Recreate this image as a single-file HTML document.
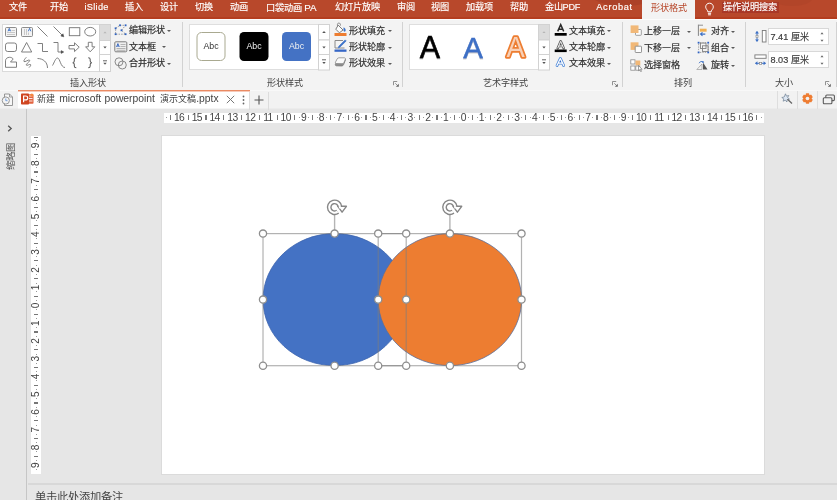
<!DOCTYPE html>
<html lang="zh-CN">
<head>
<meta charset="utf-8">
<title>PowerPoint</title>
<style>
*{box-sizing:border-box;margin:0;padding:0}
html,body{width:837px;height:500px;overflow:hidden;background:#e6e6e6}
body{will-change:transform}
body{font-family:"Liberation Sans",sans-serif;font-size:9.2px;color:#333;position:relative}
.abs{position:absolute}
/* ---------- title / tab strip ---------- */
#titlebar{position:absolute;left:0;top:0;width:837px;height:19px;background:linear-gradient(#b8482b 0,#b8482b 17px,#b43d1f 17.5px,#b43d1f 19px);overflow:hidden}
#titlebar .blob{position:absolute;border-radius:50%;background:#8e2f1f;opacity:.28}
#titlebar span{position:absolute;top:-.6px;height:17px;line-height:17px;color:#fff;font-size:9.2px;white-space:nowrap;-webkit-text-stroke:.15px #fff}
#activetab{position:absolute;left:642px;top:0;width:53px;height:20px;background:#f3f3f3}
#activetab b{position:absolute;left:0;width:53px;text-align:center;top:-.4px;line-height:17px;font-weight:normal;color:#b7472a;font-size:9.2px}
#searchhl{position:absolute;left:722px;top:2px;width:57px;height:10.5px;background:#9e2f25;opacity:.6}
/* ---------- ribbon ---------- */
#ribbon{position:absolute;left:0;top:19px;width:837px;height:71px;background:#f3f3f3;box-shadow:inset 0 1px 0 #fbfbfb}
.gsep{position:absolute;top:3px;width:1px;height:65px;background:#d2d2d2}
.glabel{position:absolute;top:58px;height:12px;line-height:12px;font-size:9.1px;color:#444;white-space:nowrap}
.rtext{position:absolute;height:12px;line-height:12px;font-size:9.1px;color:#2e2e2e;white-space:nowrap;-webkit-text-stroke:.18px #2e2e2e}
.dd{position:absolute;width:0;height:0;margin-left:.4px;border-left:2.1px solid transparent;border-right:2.1px solid transparent;border-top:2.5px solid #5a5a5a}
.gallery{position:absolute;top:5px;height:46px;background:#fff;border:1px solid #dcdcdc}
.gscroll{position:absolute;top:5px;width:11px;height:46px}
.gscroll i{position:absolute;left:0;width:11px;background:#fff;border:1px solid #d0d0d0}
.launcher{position:absolute;top:62px;width:6px;height:6px}
/* ---------- doc tab bar ---------- */
#docbar{position:absolute;left:0;top:89.5px;width:837px;height:18.5px;background:#f2f2f2;border-top:1px solid #f8f8f8;box-shadow:0 1px 0 #ececec}
#doctab{position:absolute;left:17.5px;top:-.5px;width:232px;height:18px;background:#fff;border-top:1px solid #ea8a63;box-shadow:inset 0 1px 0 rgba(234,138,99,.45),0 1px 0 #f5f5f5}
/* ---------- workspace ---------- */
#leftpane{position:absolute;left:0;top:109px;width:27px;height:391px;background:#e6e6e6;border-right:1px solid #c6c6c6}
#hruler{position:absolute;left:164px;top:112.5px;width:600px;height:10.5px;background:#fff;overflow:hidden}
#vruler{position:absolute;left:31px;top:136px;width:10px;height:337.5px;background:#fff;overflow:hidden}
#slide{position:absolute;left:162px;top:136px;width:602px;height:338px;background:#fff;box-shadow:0 0 0 1px #dbdbdb}
#notesline{position:absolute;left:28px;top:483px;width:809px;height:2px;background:#d8d8d8}
#notes{position:absolute;left:35px;top:490px;font-size:11.3px;line-height:14px;color:#444;white-space:nowrap}

#hruler b,#vr b{position:absolute;top:0;width:20px;text-align:center;font-weight:normal;font-size:10.3px;line-height:10px;color:#444;letter-spacing:-.6px;text-indent:-.6px}
#hruler i,#vr i{position:absolute;top:2.9px;width:1.2px;height:4.6px;background:#777}
#hruler u,#vr u{position:absolute;top:4.7px;width:1px;height:1px;background:#999}
#vr b{font-size:10.1px;letter-spacing:-.5px}
#vr{position:absolute;left:0;top:337.5px;width:337.5px;height:10px;transform-origin:0 0;transform:rotate(-90deg)}
.tl{position:absolute;top:.3px;height:15px;line-height:15px;font-size:10.35px;color:#444;white-space:nowrap}
</style>
</head>
<body>
<div id="titlebar">
  <div class="blob" style="left:589px;top:-22px;width:70px;height:27.500px"></div>
  <div class="blob" style="left:772px;top:-8px;width:40px;height:14px;opacity:.12"></div>
  <span style="left:9px">文件</span>
  <span style="left:49.5px">开始</span>
  <span style="left:84.5px;letter-spacing:.3px">iSlide</span>
  <span style="left:125.4px">插入</span>
  <span style="left:160px">设计</span>
  <span style="left:195px">切换</span>
  <span style="left:230px">动画</span>
  <span style="left:265.7px">口袋动画 <span style="position:static;font-size:9.8px">PA</span></span>
  <span style="left:334.5px">幻灯片放映</span>
  <span style="left:397px">审阅</span>
  <span style="left:431px">视图</span>
  <span style="left:465.7px">加载项</span>
  <span style="left:510px">帮助</span>
  <span style="left:545px;letter-spacing:-.25px">金山PDF</span>
  <span style="left:596.3px;letter-spacing:.7px">Acrobat</span>
  <svg class="abs" style="left:704px;top:2px" width="11" height="15" viewBox="0 0 11 15"><path d="M5.500 1.200c-2.300 0-3.800 1.700-3.800 3.700 0 1.400.8 2.300 1.500 3.200.4.500.6 1 .6 1.700h3.400c0-.7.200-1.200.6-1.700.7-.9 1.500-1.800 1.500-3.200 0-2-1.500-3.700-3.800-3.700zM3.900 11.300h3.200M4.100 12.800h2.800" fill="none" stroke="#fff" stroke-width="1"/></svg>
  <div id="searchhl"></div>
  <span style="left:723px">操作说明搜索</span>
</div>
<div id="activetab"><b>形状格式</b></div>

<div id="ribbon">
  <!-- ===== group 1 : insert shapes ===== -->
  <svg class="abs" style="left:2px;top:5px" width="109" height="48" viewBox="0 0 109 48">
    <rect x="0.5" y="0.5" width="97" height="47" fill="#fff" stroke="#dadada"/>
    <g fill="none" stroke="#727272" stroke-width=".9">
      <!-- row 1 -->
      <rect x="3.5" y="3.5" width="11" height="9" rx="1" fill="#f4f4f4" stroke="#808080"/>
      <path d="M9.500 6.500h3.500M5 8.500h8M5 10.500h8" stroke="#bdbdbd" stroke-width=".8"/>
      <path d="M6 7.3l1.3-3 1.3 3M6.4 6.3h1.8" stroke="#3b6fc4" stroke-width=".9"/>
      <rect x="19.500" y="3.5" width="11" height="9" rx="1" fill="#f4f4f4" stroke="#808080"/>
      <path d="M22.500 5v6M24.500 5v6M26.500 8.500v2.500" stroke="#b4b4b4" stroke-width=".7"/>
      <path d="M26.300 7.300l1.300-3 1.300 3" stroke="#3b6fc4" stroke-width=".9"/>
      <path d="M35.500 2.500l10 10"/>
      <path d="M51.500 2.500l9.500 9.500"/><path d="M61.800 12.800l-3-.8 2.200-2.200z" fill="#444" stroke="#444" stroke-width=".5"/>
      <rect x="67.300" y="3.700" width="10.500" height="8"/>
      <ellipse cx="88.200" cy="7.700" rx="5.500" ry="4.300"/>
      <!-- row 2 -->
      <rect x="3.500" y="19" width="11" height="8.500" rx="2.200"/>
      <path d="M19.500 28l5.100-9.500 5.100 9.500z"/>
      <path d="M35.500 19.500h5v8h5.500"/>
      <path d="M51.500 18.500h4.500v9.500h4"/><path d="M61.800 28l-2.600-1.500v3z" fill="#444" stroke="#444" stroke-width=".4"/>
      <path d="M67 21.500h5.500v-2.700l4.700 4.400-4.700 4.400v-2.700h-5.500z"/>
      <path d="M86.300 18.300h3.800v4.500h2.700l-4.600 5-4.600-5h2.700z"/>
      <!-- row 3 -->
      <path d="M3.500 43.300v-6.500c0-2 1.700-3.500 4-3.500 1.800 0 3 .7 3.700 1.700l-2.700 3h6v5.300z"/>
      <path d="M24.300 33.300c-1.400 1.600-2.800 3.200-2.300 4.200.6 1.100 4.800-2.300 5.600-1.300.9 1.100-3.800 3.600-3.300 4.900.4 1 3.600-1.300 4.300-.5.600.7-.8 2.200-1.600 3" stroke-width=".9"/>
      <path d="M35.500 34.500c5.500 0 10 3.500 10 9.500"/>
      <path d="M50.500 41.500c1.800-3 3-7.500 5-7.500 2.500 0 3 9.500 7.500 9.500"/>
      <path d="M74.300 33.800c-1.800 0-2 .6-2 1.800v1.500c0 1-.5 1.500-1.600 1.700 1.100.2 1.600.7 1.600 1.700v1.500c0 1.200.2 1.800 2 1.800" stroke="#5a5a5a" stroke-width="1.050"/>
      <path d="M86.200 33.800c1.800 0 2 .6 2 1.800v1.500c0 1 .5 1.500 1.600 1.700-1.100.2-1.600.7-1.600 1.700v1.500c0 1.200-.2 1.800-2 1.800" stroke="#5a5a5a" stroke-width="1.050"/>
    </g>
    <!-- scroll buttons -->
    <rect x="97.500" y="0.500" width="11" height="16" fill="#dcdcdc" stroke="#d2d2d2"/>
    <rect x="97.500" y="16.500" width="11" height="14" fill="#fff" stroke="#d2d2d2"/>
    <rect x="97.500" y="30.500" width="11" height="17" fill="#fff" stroke="#d2d2d2"/>
    <path d="M101.400 9.200l1.600-1.800 1.600 1.800z" fill="#b5b5b5"/>
    <path d="M101.300 22.500h3.400l-1.700 2z" fill="#555"/>
    <path d="M101 36.800h4" stroke="#555" stroke-width=".9"/>
    <path d="M101.300 38.800h3.400l-1.700 2z" fill="#555"/>
  </svg>
  <!-- edit shape -->
  <svg class="abs" style="left:114px;top:5px" width="14" height="12" viewBox="0 0 14 12">
    <path d="M1.6 4.3 L6 1.3 L11.6 1.3 L7.5 6.3 L11.6 10.2 L1.6 10.2z" fill="none" stroke="#8a8a8a" stroke-width=".8" stroke-dasharray="1.500 1.100"/>
    <g fill="#2f62c0"><rect x="0.7" y="3.4" width="1.800" height="1.800"/><rect x="5.1" y="0.4" width="1.800" height="1.800"/><rect x="10.7" y="0.4" width="1.800" height="1.800"/><rect x="6.6" y="5.4" width="1.800" height="1.800"/><rect x="10.7" y="9.3" width="1.800" height="1.800"/><rect x="0.7" y="9.3" width="1.800" height="1.800"/></g>
  </svg>
  <div class="rtext" style="left:129px;top:5px">编辑形状</div><div class="dd" style="left:167px;top:10.500px"></div>
  <!-- text box -->
  <svg class="abs" style="left:114px;top:21.500px" width="14" height="12" viewBox="0 0 14 12">
    <rect x=".8" y=".8" width="12" height="10" rx="1" fill="#efefef" stroke="#7d7d7d"/>
    <path d="M6.500 3.500h5M6.500 5.500h5M2.500 7.500h9M2.500 9.300h9" stroke="#a5a5a5" stroke-width=".8" fill="none"/>
    <path d="M2.500 6l1.400-3.400 1.400 3.400M3 5h1.800" stroke="#2f62c0" stroke-width=".9" fill="none"/>
  </svg>
  <div class="rtext" style="left:129px;top:21.500px">文本框</div><div class="dd" style="left:162px;top:27px"></div>
  <!-- merge shapes -->
  <svg class="abs" style="left:114px;top:38px" width="14" height="13" viewBox="0 0 14 13">
    <circle cx="5" cy="4.800" r="4" fill="#f3f3f3" stroke="#7d7d7d" stroke-width=".9"/>
    <circle cx="8.300" cy="8" r="4" fill="none" stroke="#7d7d7d" stroke-width=".9"/>
  </svg>
  <div class="rtext" style="left:129px;top:38px">合并形状</div><div class="dd" style="left:167px;top:44px"></div>
  <div class="glabel" style="left:70px">插入形状</div>
  <div class="gsep" style="left:182px"></div>
  <!-- ===== group 2 : shape styles ===== -->
  <svg class="abs" style="left:189px;top:5px" width="141" height="47" viewBox="0 0 141 47">
    <rect x="0.5" y="0.5" width="129" height="45" fill="#fff" stroke="#dedede"/>
    <rect x="8" y="8.500" width="28" height="28" rx="4.500" fill="#fff" stroke="#a9a990" stroke-width="1"/>
    <rect x="50.500" y="8" width="29" height="29" rx="4.500" fill="#000"/>
    <rect x="93" y="8" width="29" height="29" rx="4.500" fill="#4472c4"/>
    <g font-family="Liberation Sans, sans-serif" font-size="8.800" text-anchor="middle">
      <text x="22" y="24.800" fill="#333">Abc</text>
      <text x="65" y="24.800" fill="#f2f2f2">Abc</text>
      <text x="107.500" y="24.800" fill="#f2f2f2">Abc</text>
    </g>
    <rect x="129.500" y="0.500" width="11" height="15.500" fill="#fff" stroke="#d2d2d2"/>
    <rect x="129.500" y="16" width="11" height="14.500" fill="#fff" stroke="#d2d2d2"/>
    <rect x="129.500" y="30.500" width="11" height="15.500" fill="#fff" stroke="#d2d2d2"/>
    <path d="M133.200 9.100l1.800-2 1.800 2z" fill="#555"/>
    <path d="M133.300 22.400h3.400l-1.700 2z" fill="#555"/>
    <path d="M133 35.800h4" stroke="#555" stroke-width=".9"/>
    <path d="M133.300 38h3.400l-1.700 2z" fill="#555"/>
  </svg>
  <!-- shape fill -->
  <svg class="abs" style="left:334px;top:3px" width="14" height="15" viewBox="0 0 14 15">
    <path d="M4.200 3.200l4.800 4.800-3.600 2.800-3.600-3.600z" fill="#fdfdfd" stroke="#6d6d6d" stroke-width=".9" stroke-linejoin="round"/>
    <path d="M3.500 3.800c-.4-1.800.4-2.800 1.400-2.800s1.700 1 1.500 2.600" fill="none" stroke="#6d6d6d" stroke-width=".8"/>
    <path d="M9.500 5.500c1.200.3 2.200 1.300 2.200 2.800 0 .8-.5 1.400-1.100 1.400s-1.100-.6-1.100-1.400z" fill="#3d73c9"/>
    <rect x=".5" y="11" width="12" height="3" fill="#ed7d31"/>
  </svg>
  <div class="rtext" style="left:349px;top:5.500px">形状填充</div><div class="dd" style="left:387.500px;top:11px"></div>
  <!-- shape outline -->
  <svg class="abs" style="left:334px;top:19px" width="14" height="15" viewBox="0 0 14 15">
    <path d="M9 2.500H1v7.500h9.500" fill="none" stroke="#8a8a8a" stroke-width="1"/>
    <path d="M4.800 8.300l6.400-6.400 1 1-6.400 6.400-1.500.5z" fill="#3d73c9" stroke="#3d73c9" stroke-width=".7" stroke-linejoin="round"/>
    <rect x=".5" y="11.500" width="12" height="2.300" fill="#3667c6"/>
  </svg>
  <div class="rtext" style="left:349px;top:22px">形状轮廓</div><div class="dd" style="left:387.500px;top:27.500px"></div>
  <!-- shape effects -->
  <svg class="abs" style="left:334px;top:37.400px" width="14" height="13" viewBox="0 0 14 13">
    <path d="M2.200 9.800c-.9-.3-1.200-1-.7-2l2-4c.4-.8 1-1.200 1.900-1.200h4.800c1.100 0 1.500.8 1.100 1.800l-1.700 4.200c-.4.900-.9 1.400-1.900 1.400z" fill="#8f8f8f" stroke="#707070" stroke-width=".7"/>
    <path d="M2.300 7.600c-.9-.2-1.100-.9-.7-1.700l1.500-2.900c.4-.8 1-1.200 1.900-1.200h5.200c1.100 0 1.500.7 1.100 1.600l-1.300 3c-.4.900-.9 1.300-1.900 1.300z" fill="#fafafa" stroke="#7b7b7b" stroke-width=".7"/>
  </svg>
  <div class="rtext" style="left:349px;top:38px">形状效果</div><div class="dd" style="left:387.500px;top:43.500px"></div>
  <div class="glabel" style="left:267.300px">形状样式</div>
  <svg class="launcher" style="left:392.500px" viewBox="0 0 6 6"><path d="M.5 4.200V.5H4.200M2.300 2.300l2.500 2.500" fill="none" stroke="#777" stroke-width=".8"/><path d="M5.800 2.800v3h-3z" fill="#666"/></svg>
  <div class="gsep" style="left:401.500px"></div>
  <!-- ===== group 3 : wordart styles ===== -->
  <svg class="abs" style="left:409px;top:5px" width="141" height="47" viewBox="0 0 141 47">
    <defs><filter id="sh" x="-20%" y="-20%" width="140%" height="150%"><feDropShadow dx="0" dy="1" stdDeviation=".7" flood-color="#000" flood-opacity=".35"/></filter></defs>
    <rect x="0.5" y="0.5" width="129" height="45" fill="#fff" stroke="#dedede"/>
    <g font-family="Liberation Sans, sans-serif" font-size="30.500" text-anchor="middle">
      <text x="20.800" y="34" fill="#000" stroke="#000" stroke-width=".5" filter="url(#sh)">A</text>
      <text x="64" y="34" fill="#3e6fc6" stroke="#3e6fc6" stroke-width=".4" font-size="29.500" filter="url(#sh)">A</text>
      <g transform="translate(106.700 33.400) scale(.936 1)"><text x="0" y="0" fill="#ed7d31" stroke="#ed7d31" stroke-width="3.600" stroke-linejoin="round" font-size="29.300">A</text><text x="0" y="0" fill="#f8d0b6" font-size="29.300">A</text></g>
    </g>
    <rect x="129.500" y="0.500" width="11" height="15.500" fill="#dcdcdc" stroke="#d2d2d2"/>
    <rect x="129.500" y="16" width="11" height="14.500" fill="#fff" stroke="#d2d2d2"/>
    <rect x="129.500" y="30.500" width="11" height="15.500" fill="#fff" stroke="#d2d2d2"/>
    <path d="M133.400 9l1.600-1.800 1.600 1.800z" fill="#b5b5b5"/>
    <path d="M133.300 22.400h3.400l-1.700 2z" fill="#555"/>
    <path d="M133 35.800h4" stroke="#555" stroke-width=".9"/>
    <path d="M133.300 38h3.400l-1.700 2z" fill="#555"/>
  </svg>
  <!-- text fill -->
  <svg class="abs" style="left:553.500px;top:3px" width="14" height="15" viewBox="0 0 14 15">
    <path d="M3.700 9.400l3-6.800 3 6.800M4.700 7.200h4" fill="none" stroke="#2b2b2b" stroke-width="1.500" stroke-linejoin="miter"/>
    <rect x=".7" y="11" width="12" height="2.700" fill="#000"/>
  </svg>
  <div class="rtext" style="left:568.500px;top:5.500px">文本填充</div><div class="dd" style="left:607px;top:11px"></div>
  <!-- text outline -->
  <svg class="abs" style="left:553.500px;top:19px" width="14" height="15" viewBox="0 0 14 15">
    <path d="M3.700 10.300l3-7 3 7M4.800 8h3.800" fill="none" stroke="#5a5a5a" stroke-width="2.500" stroke-linejoin="round" stroke-linecap="round"/>
    <path d="M3.700 10.300l3-7 3 7M4.800 8h3.800" fill="none" stroke="#fff" stroke-width=".9"/>
    <rect x=".7" y="11.500" width="12" height="2.600" fill="#000"/>
  </svg>
  <div class="rtext" style="left:568.500px;top:22px">文本轮廓</div><div class="dd" style="left:607px;top:27.500px"></div>
  <!-- text effects -->
  <svg class="abs" style="left:553.500px;top:36px" width="14" height="15" viewBox="0 0 14 15">
    <path d="M3 10.600l3.350-7.200 3.350 7.200M4.200 8.200h4.300" fill="none" stroke="#4a86d8" stroke-width="2.700" stroke-linejoin="round" stroke-linecap="round"/>
    <path d="M3 10.600l3.350-7.200 3.350 7.200M4.200 8.200h4.300" fill="none" stroke="#fff" stroke-width="1.200" stroke-linejoin="round" stroke-linecap="round"/>
    <circle cx="6.350" cy="6.600" r=".6" fill="#2f62c0"/>
  </svg>
  <div class="rtext" style="left:568.500px;top:38px">文本效果</div><div class="dd" style="left:607px;top:43.500px"></div>
  <div class="glabel" style="left:482.800px">艺术字样式</div>
  <svg class="launcher" style="left:612px" viewBox="0 0 6 6"><path d="M.5 4.200V.5H4.200M2.300 2.300l2.500 2.500" fill="none" stroke="#777" stroke-width=".8"/><path d="M5.800 2.800v3h-3z" fill="#666"/></svg>
  <div class="gsep" style="left:621.500px"></div>
  <!-- ===== group 4 : arrange ===== -->
  <!-- bring forward -->
  <svg class="abs" style="left:630px;top:6px" width="13" height="12" viewBox="0 0 13 12">
    <rect x="5.500" y="4.500" width="5.800" height="5.800" rx=".6" fill="#fdfdfd" stroke="#909090" stroke-width=".85"/>
    <rect x=".6" y=".4" width="7.900" height="7.600" fill="#f1b878"/>
  </svg>
  <div class="rtext" style="left:644.300px;top:6px">上移一层</div><div class="dd" style="left:687px;top:11.500px"></div>
  <!-- send backward -->
  <svg class="abs" style="left:630px;top:23px" width="13" height="12" viewBox="0 0 13 12">
    <rect x=".6" y=".3" width="7.900" height="7.600" fill="#f1b878"/>
    <rect x="5.200" y="4.200" width="6.300" height="6.300" rx=".6" fill="#fdfdfd" stroke="#8a8a8a" stroke-width=".9"/>
  </svg>
  <div class="rtext" style="left:644.300px;top:22.500px">下移一层</div><div class="dd" style="left:687px;top:28px"></div>
  <!-- selection pane -->
  <svg class="abs" style="left:630px;top:40px" width="13" height="13" viewBox="0 0 13 13">
    <rect x=".8" y=".8" width="4.200" height="4.200" fill="#fff" stroke="#8a8a8a" stroke-width=".8"/>
    <rect x="5.500" y="1.500" width="4.800" height="4.800" fill="#f1b878"/>
    <rect x=".8" y="7" width="4.200" height="4.200" fill="#fff" stroke="#8a8a8a" stroke-width=".8"/>
    <rect x="5.800" y="7" width="4" height="4.200" fill="#fff" stroke="#8a8a8a" stroke-width=".8"/>
    <path d="M8.500 6.500v5.200l1.200-1 1 2 .8-.4-1-2h1.600z" fill="#fff" stroke="#666" stroke-width=".6"/>
  </svg>
  <div class="rtext" style="left:644.300px;top:40px">选择窗格</div>
  <!-- align -->
  <svg class="abs" style="left:697px;top:5px" width="12" height="14" viewBox="0 0 12 14">
    <path d="M1.400 .7v11.200" stroke="#858585" stroke-width="1" fill="none"/>
    <path d="M1.400 1.200h4.600" stroke="#858585" stroke-width=".9" fill="none"/>
    <rect x="2.800" y="4.700" width="6.800" height="3" fill="#f1b050"/>
    <path d="M8.300 10.100h-4.600M5.500 8.300l-2 1.800 2 1.800" fill="none" stroke="#3b6fc4" stroke-width="1.100"/>
  </svg>
  <div class="rtext" style="left:710.600px;top:6px">对齐</div><div class="dd" style="left:730.500px;top:11.500px"></div>
  <!-- group -->
  <svg class="abs" style="left:696.500px;top:22px" width="13" height="13" viewBox="0 0 13 13">
    <path d="M3 1.700h7M3 11.400h7M1.600 3v7M11.200 3v7" fill="none" stroke="#8f8f8f" stroke-width=".8" stroke-dasharray="1.300 1.100"/>
    <rect x="3.400" y="2.100" width="5.600" height="5.400" fill="#f6f6f6" stroke="#7a7a7a" stroke-width=".85"/>
    <rect x="5.500" y="4.800" width="5.600" height="5.600" fill="none" stroke="#7a7a7a" stroke-width=".85"/>
    <g fill="#2f62c0"><rect x=".7" y=".8" width="1.800" height="1.800"/><rect x="10.300" y=".8" width="1.800" height="1.800"/><rect x=".7" y="10.500" width="1.800" height="1.800"/><rect x="10.300" y="10.500" width="1.800" height="1.800"/></g>
  </svg>
  <div class="rtext" style="left:710.600px;top:22.500px">组合</div><div class="dd" style="left:730.500px;top:28px"></div>
  <!-- rotate -->
  <svg class="abs" style="left:696px;top:41px" width="13" height="11" viewBox="0 0 13 11">
    <path d="M.8 9.500l5.200-5.500v5.500z" fill="#f2f2f2" stroke="#9a9a9a" stroke-width=".7"/>
    <path d="M7 9.500v-7l4.500 7z" fill="#555"/>
    <path d="M3 3.200c.8-1.600 2.600-2.200 4.200-1.400" fill="none" stroke="#3b6fc4" stroke-width=".9"/><path d="M8.200 2.600l-2.300.4 1.300-1.900z" fill="#3b6fc4"/>
  </svg>
  <div class="rtext" style="left:710.600px;top:40px">旋转</div><div class="dd" style="left:730.500px;top:45.500px"></div>
  <div class="glabel" style="left:674.300px">排列</div>
  <div class="gsep" style="left:745px"></div>
  <!-- ===== group 5 : size ===== -->
  <svg class="abs" style="left:753.500px;top:10.500px" width="13" height="13" viewBox="0 0 13 13">
    <rect x="8.300" y=".5" width="3.700" height="11.500" fill="#fff" stroke="#7a7a7a" stroke-width=".9"/>
    <path d="M3 1.500v10" stroke="#3b6fc4" stroke-width="1" fill="none"/>
    <path d="M1 3.400l2-2.400 2 2.400zM1 9.400l2 2.400 2-2.400z" fill="#3b6fc4"/>
    <rect x="2" y="5.200" width="2" height="2.400" fill="#fff" stroke="#7a7a7a" stroke-width=".6"/>
  </svg>
  <div class="abs" style="left:768px;top:9px;width:60.500px;height:17px;background:#fff;border:1px solid #d8d8d8"></div>
  <div class="rtext" style="left:770.500px;top:12px;color:#444">7.41 厘米</div>
  <svg class="abs" style="left:819px;top:12px" width="6" height="12" viewBox="0 0 6 12"><path d="M1.500 3.200l1.500-1.900 1.500 1.900zM1.500 8.800l1.500 1.900 1.500-1.900z" fill="#666"/></svg>
  <svg class="abs" style="left:753.500px;top:34.500px" width="13" height="13" viewBox="0 0 13 13">
    <rect x=".9" y=".9" width="11.200" height="3.400" fill="#fff" stroke="#7a7a7a" stroke-width=".9"/>
    <path d="M1.500 9.300h10" stroke="#3b6fc4" stroke-width="1" fill="none"/>
    <path d="M3.400 7.300l-2.400 2 2.400 2zM9.600 7.300l2.400 2-2.400 2z" fill="#3b6fc4"/>
    <rect x="5.300" y="8.300" width="2.400" height="2" fill="#fff" stroke="#7a7a7a" stroke-width=".6"/>
  </svg>
  <div class="abs" style="left:768px;top:32px;width:60.500px;height:17.300px;background:#fff;border:1px solid #d8d8d8"></div>
  <div class="rtext" style="left:770.500px;top:35px;color:#444">8.03 厘米</div>
  <svg class="abs" style="left:819px;top:35px" width="6" height="12" viewBox="0 0 6 12"><path d="M1.500 3.200l1.500-1.900 1.500 1.900zM1.500 8.800l1.500 1.900 1.500-1.900z" fill="#666"/></svg>
  <div class="glabel" style="left:774.700px">大小</div>
  <div class="gsep" style="left:835.500px"></div>
  <svg class="launcher" style="left:825px" viewBox="0 0 6 6"><path d="M.5 4.200V.5H4.200M2.300 2.300l2.500 2.500" fill="none" stroke="#777" stroke-width=".8"/><path d="M5.800 2.800v3h-3z" fill="#666"/></svg>
</div>
<div id="docbar">
  <svg class="abs" style="left:1px;top:2.500px" width="13" height="14" viewBox="0 0 13 14">
    <path d="M3.500 1h5l3 3v8.500h-8z" fill="#f7f7f7" stroke="#8c8c8c" stroke-width=".9"/><path d="M8.500 1v3h3" fill="none" stroke="#8c8c8c" stroke-width=".8"/>
    <circle cx="4.800" cy="7.500" r="3.600" fill="#f4f4f4" stroke="#8c8c8c" stroke-width=".9"/><path d="M4.800 5.500v2.200h1.700" fill="none" stroke="#5b8dd6" stroke-width=".8"/>
  </svg>
  <div id="doctab">
    <svg class="abs" style="left:3.500px;top:2px" width="13" height="12" viewBox="0 0 13 12">
      <rect x="5" y="1.200" width="7.500" height="9.600" rx=".8" fill="#e2633f"/>
      <rect x="6" y="2.500" width="5.500" height="1" fill="#fff" opacity=".85"/><rect x="6" y="5" width="5.500" height="1" fill="#fff" opacity=".85"/><rect x="6" y="7.500" width="5.500" height="1" fill="#fff" opacity=".85"/>
      <circle cx="10.900" cy="1.900" r="1.500" fill="#f5873f"/>
      <rect x="0" y="0.500" width="8" height="11" rx=".8" fill="#cf4520"/>
      <path d="M2.600 9.300v-6.300h2c1.400 0 2.100.8 2.100 1.900s-.8 2-2.100 2h-1.900" fill="none" stroke="#fff" stroke-width="1.200"/>
    </svg>
    <span class="tl" style="left:19.600px;font-size:9px;top:1.100px">新建</span><span class="tl" style="left:41.700px">microsoft</span><span class="tl" style="left:86.900px">powerpoint</span><span class="tl" style="left:142.700px;font-size:9px;top:1.100px">演示文稿</span><span class="tl" style="left:178.700px">.pptx</span>
    <svg class="abs" style="left:208px;top:4px" width="9" height="9" viewBox="0 0 9 9"><path d="M.8 .8l7.400 7.400M8.200 .8l-7.400 7.400" stroke="#777" stroke-width="1" fill="none"/></svg>
    <svg class="abs" style="left:224px;top:3.500px" width="3" height="10" viewBox="0 0 3 10"><circle cx="1.500" cy="1.500" r=".9" fill="#666"/><circle cx="1.500" cy="5" r=".9" fill="#666"/><circle cx="1.500" cy="8.500" r=".9" fill="#666"/></svg>
  </div>
  <div class="abs" style="left:249px;top:1px;width:1px;height:18px;background:#dcdcdc"></div>
  <svg class="abs" style="left:254px;top:4.500px" width="10" height="10" viewBox="0 0 10 10"><path d="M5 .5v9M.5 5h9" stroke="#555" stroke-width="1.100" fill="none"/></svg>
  <div class="abs" style="left:268px;top:1px;width:1px;height:18px;background:#dcdcdc"></div>
  <!-- right icons -->
  <div class="abs" style="left:777px;top:0;width:1px;height:18px;background:#dedede"></div>
  <div class="abs" style="left:797px;top:0;width:1px;height:18px;background:#dedede"></div>
  <div class="abs" style="left:817px;top:0;width:1px;height:18px;background:#dedede"></div>
  <svg class="abs" style="left:781px;top:2.600px" width="12" height="11" viewBox="0 0 12 11">
    <path d="M4.500 .8l.9 2.300 2.400-.6-1.200 2.100 1.900 1.500-2.400.5-.2 2.400-1.600-1.800-2.200 1 .7-2.300-2-1.400 2.400-.5z" fill="#dde7f3" stroke="#6f7f92" stroke-width=".7" stroke-linejoin="round"/>
    <path d="M6.500 6.200l4.500 4.200" stroke="#666" stroke-width="1.300" fill="none"/>
  </svg>
  <svg class="abs" style="left:802.100px;top:2.400px" width="11" height="11" viewBox="-6 -6 12 12"><g fill="#ee7d33"><circle r="4.500"/><rect x="-1.900" y="-5.700" width="3.800" height="3" rx=".7" transform="rotate(0)"/><rect x="-1.900" y="-5.700" width="3.800" height="3" rx=".7" transform="rotate(60)"/><rect x="-1.900" y="-5.700" width="3.800" height="3" rx=".7" transform="rotate(120)"/><rect x="-1.900" y="-5.700" width="3.800" height="3" rx=".7" transform="rotate(180)"/><rect x="-1.900" y="-5.700" width="3.800" height="3" rx=".7" transform="rotate(240)"/><rect x="-1.900" y="-5.700" width="3.800" height="3" rx=".7" transform="rotate(300)"/></g><circle r="2" fill="#f2f2f2"/></svg>
  <svg class="abs" style="left:822px;top:3.500px" width="14" height="12" viewBox="0 0 14 12"><rect x="3.800" y="1" width="8.600" height="5.600" rx="1" fill="#f2f2f2" stroke="#5c5c5c" stroke-width="1.100"/><rect x="1.300" y="3.800" width="8.600" height="6" rx="1" fill="#f2f2f2" stroke="#5c5c5c" stroke-width="1.100"/></svg>
</div>
<div id="leftpane">
  <svg class="abs" style="left:7px;top:16px" width="6" height="7" viewBox="0 0 6 7"><path d="M1.200 .8l3 2.700-3 2.700" fill="none" stroke="#555" stroke-width="1.300"/></svg>
  <div class="abs" style="left:-4.500px;top:41.500px;width:30px;height:10px;line-height:10px;font-size:9.300px;color:#555;text-align:center;transform:rotate(-90deg);transform-origin:50% 50%;white-space:nowrap">缩略图</div>
</div>
<div id="hruler"><b style="left:5.4px">16</b><b style="left:23.1px">15</b><b style="left:40.9px">14</b><b style="left:58.7px">13</b><b style="left:76.5px">12</b><b style="left:94.2px">11</b><b style="left:112.0px">10</b><b style="left:129.8px">9</b><b style="left:147.5px">8</b><b style="left:165.3px">7</b><b style="left:183.1px">6</b><b style="left:200.8px">5</b><b style="left:218.6px">4</b><b style="left:236.4px">3</b><b style="left:254.2px">2</b><b style="left:271.9px">1</b><b style="left:289.7px">0</b><b style="left:307.5px">1</b><b style="left:325.2px">2</b><b style="left:343.0px">3</b><b style="left:360.8px">4</b><b style="left:378.5px">5</b><b style="left:396.3px">6</b><b style="left:414.1px">7</b><b style="left:431.9px">8</b><b style="left:449.6px">9</b><b style="left:467.4px">10</b><b style="left:485.2px">11</b><b style="left:502.9px">12</b><b style="left:520.7px">13</b><b style="left:538.5px">14</b><b style="left:556.2px">15</b><b style="left:574.0px">16</b><i style="left:5.9px"></i><u style="left:1.6px"></u><i style="left:23.7px"></i><i style="left:41.4px"></i><i style="left:59.2px"></i><i style="left:77.0px"></i><i style="left:94.7px"></i><i style="left:112.5px"></i><i style="left:130.3px"></i><u style="left:134.8px"></u><i style="left:148.1px"></i><u style="left:143.7px"></u><u style="left:152.6px"></u><i style="left:165.8px"></i><u style="left:161.5px"></u><u style="left:170.4px"></u><i style="left:183.6px"></i><u style="left:179.3px"></u><u style="left:188.1px"></u><i style="left:201.4px"></i><u style="left:197.0px"></u><u style="left:205.9px"></u><i style="left:219.1px"></i><u style="left:214.8px"></u><u style="left:223.7px"></u><i style="left:236.9px"></i><u style="left:232.6px"></u><u style="left:241.4px"></u><i style="left:254.7px"></i><u style="left:250.3px"></u><u style="left:259.2px"></u><i style="left:272.4px"></i><u style="left:268.1px"></u><u style="left:277.0px"></u><i style="left:290.2px"></i><u style="left:285.9px"></u><u style="left:294.8px"></u><i style="left:308.0px"></i><u style="left:303.6px"></u><u style="left:312.5px"></u><i style="left:325.8px"></i><u style="left:321.4px"></u><u style="left:330.3px"></u><i style="left:343.5px"></i><u style="left:339.2px"></u><u style="left:348.1px"></u><i style="left:361.3px"></i><u style="left:357.0px"></u><u style="left:365.8px"></u><i style="left:379.1px"></i><u style="left:374.7px"></u><u style="left:383.6px"></u><i style="left:396.8px"></i><u style="left:392.5px"></u><u style="left:401.4px"></u><i style="left:414.6px"></i><u style="left:410.3px"></u><u style="left:419.1px"></u><i style="left:432.4px"></i><u style="left:428.0px"></u><u style="left:436.9px"></u><i style="left:450.1px"></i><u style="left:445.8px"></u><u style="left:454.7px"></u><i style="left:467.9px"></i><u style="left:463.6px"></u><i style="left:485.7px"></i><i style="left:503.5px"></i><i style="left:521.2px"></i><i style="left:539.0px"></i><i style="left:556.8px"></i><i style="left:574.5px"></i><i style="left:592.3px"></i><u style="left:596.8px"></u></div>
<div id="vruler"><div id="vr"><b style="left:318.6px">9</b><b style="left:300.9px">8</b><b style="left:283.1px">7</b><b style="left:265.3px">6</b><b style="left:247.5px">5</b><b style="left:229.8px">4</b><b style="left:212.0px">3</b><b style="left:194.2px">2</b><b style="left:176.5px">1</b><b style="left:158.7px">0</b><b style="left:140.9px">1</b><b style="left:123.2px">2</b><b style="left:105.4px">3</b><b style="left:87.6px">4</b><b style="left:69.9px">5</b><b style="left:52.1px">6</b><b style="left:34.3px">7</b><b style="left:16.5px">8</b><b style="left:-1.2px">9</b><i style="left:336.3px"></i><u style="left:332.6px"></u><i style="left:319.1px"></i><u style="left:323.7px"></u><u style="left:314.8px"></u><i style="left:301.4px"></i><u style="left:305.9px"></u><u style="left:297.0px"></u><i style="left:283.6px"></i><u style="left:288.1px"></u><u style="left:279.3px"></u><i style="left:265.8px"></i><u style="left:270.4px"></u><u style="left:261.5px"></u><i style="left:248.1px"></i><u style="left:252.6px"></u><u style="left:243.7px"></u><i style="left:230.3px"></i><u style="left:234.8px"></u><u style="left:226.0px"></u><i style="left:212.5px"></i><u style="left:217.1px"></u><u style="left:208.2px"></u><i style="left:194.8px"></i><u style="left:199.3px"></u><u style="left:190.4px"></u><i style="left:177.0px"></i><u style="left:181.5px"></u><u style="left:172.6px"></u><i style="left:159.2px"></i><u style="left:163.8px"></u><u style="left:154.9px"></u><i style="left:141.4px"></i><u style="left:146.0px"></u><u style="left:137.1px"></u><i style="left:123.7px"></i><u style="left:128.2px"></u><u style="left:119.3px"></u><i style="left:105.9px"></i><u style="left:110.4px"></u><u style="left:101.6px"></u><i style="left:88.1px"></i><u style="left:92.7px"></u><u style="left:83.8px"></u><i style="left:70.4px"></i><u style="left:74.9px"></u><u style="left:66.0px"></u><i style="left:52.6px"></i><u style="left:57.1px"></u><u style="left:48.3px"></u><i style="left:34.8px"></i><u style="left:39.4px"></u><u style="left:30.5px"></u><i style="left:17.1px"></i><u style="left:21.6px"></u><u style="left:12.7px"></u><u style="left:3.8px"></u></div></div>
<div id="slide"></div>
<svg class="abs" style="left:240px;top:190px" width="300" height="190" viewBox="0 0 300 190"><ellipse cx="94.6" cy="109.6" rx="71.6" ry="66.0" fill="#4472c4" stroke="#3a62ad" stroke-width=".8"/><ellipse cx="209.9" cy="109.6" rx="71.7" ry="66.0" fill="#ed7d31" stroke="#5b6f9a" stroke-width=".8"/><rect x="23.0" y="43.6" width="143.2" height="132.1" fill="none" stroke="#7e7e7e" stroke-opacity=".6" stroke-width="1.200"/><path d="M94.6 43.6V24.5" stroke="#b4b4b4" stroke-width="1.400" fill="none"/><g transform="translate(94.6,17.3)"><path d="M3.100 4.420A5.400 5.400 0 1 1 5.380 -0.470" fill="none" stroke="#868686" stroke-width="4.900"/><path d="M3.200 -1h8.600l-4.300 5.900z" fill="#fff" stroke="#868686" stroke-width="1.400" stroke-linejoin="round"/><path d="M3.100 4.420A5.400 5.400 0 1 1 5.380 -0.400" fill="none" stroke="#fff" stroke-width="2.100"/><path d="M5.380 -0.400v1.500" stroke="#fff" stroke-width="2.100" fill="none"/></g><rect x="138.2" y="43.6" width="143.3" height="132.1" fill="none" stroke="#7e7e7e" stroke-opacity=".6" stroke-width="1.200"/><path d="M209.9 43.6V24.5" stroke="#b4b4b4" stroke-width="1.400" fill="none"/><g transform="translate(209.9,17.3)"><path d="M3.100 4.420A5.400 5.400 0 1 1 5.380 -0.470" fill="none" stroke="#868686" stroke-width="4.900"/><path d="M3.200 -1h8.600l-4.300 5.900z" fill="#fff" stroke="#868686" stroke-width="1.400" stroke-linejoin="round"/><path d="M3.100 4.420A5.400 5.400 0 1 1 5.380 -0.400" fill="none" stroke="#fff" stroke-width="2.100"/><path d="M5.380 -0.400v1.500" stroke="#fff" stroke-width="2.100" fill="none"/></g><circle cx="23.0" cy="43.6" r="3.600" fill="#fff" stroke="#8e8e8e" stroke-width="1.300"/><circle cx="23.0" cy="109.6" r="3.600" fill="#fff" stroke="#8e8e8e" stroke-width="1.300"/><circle cx="23.0" cy="175.7" r="3.600" fill="#fff" stroke="#8e8e8e" stroke-width="1.300"/><circle cx="94.6" cy="43.6" r="3.600" fill="#fff" stroke="#8e8e8e" stroke-width="1.300"/><circle cx="94.6" cy="175.7" r="3.600" fill="#fff" stroke="#8e8e8e" stroke-width="1.300"/><circle cx="166.2" cy="43.6" r="3.600" fill="#fff" stroke="#8e8e8e" stroke-width="1.300"/><circle cx="166.2" cy="109.6" r="3.600" fill="#fff" stroke="#8e8e8e" stroke-width="1.300"/><circle cx="166.2" cy="175.7" r="3.600" fill="#fff" stroke="#8e8e8e" stroke-width="1.300"/><circle cx="138.2" cy="43.6" r="3.600" fill="#fff" stroke="#8e8e8e" stroke-width="1.300"/><circle cx="138.2" cy="109.6" r="3.600" fill="#fff" stroke="#8e8e8e" stroke-width="1.300"/><circle cx="138.2" cy="175.7" r="3.600" fill="#fff" stroke="#8e8e8e" stroke-width="1.300"/><circle cx="209.9" cy="43.6" r="3.600" fill="#fff" stroke="#8e8e8e" stroke-width="1.300"/><circle cx="209.9" cy="175.7" r="3.600" fill="#fff" stroke="#8e8e8e" stroke-width="1.300"/><circle cx="281.5" cy="43.6" r="3.600" fill="#fff" stroke="#8e8e8e" stroke-width="1.300"/><circle cx="281.5" cy="109.6" r="3.600" fill="#fff" stroke="#8e8e8e" stroke-width="1.300"/><circle cx="281.5" cy="175.7" r="3.600" fill="#fff" stroke="#8e8e8e" stroke-width="1.300"/></svg>
<div id="notesline"></div>
<div id="notes">单击此处添加备注</div>
</body>
</html>
